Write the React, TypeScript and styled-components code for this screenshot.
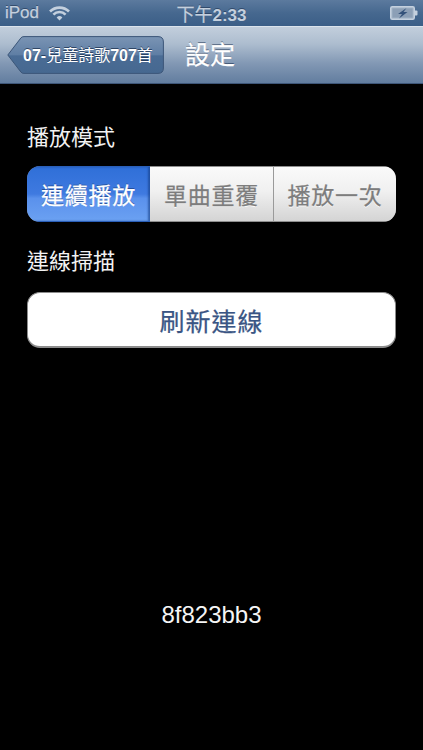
import React from "react";
import styled, { createGlobalStyle } from "styled-components";

const CJK = `"Liberation Sans", "Noto Sans CJK TC", sans-serif`;

const Global = createGlobalStyle`
  html, body { margin: 0; padding: 0; background: #000; }
  body { font-family: ${CJK}; }
`;

const Page = styled.div`
  width: 423px;
  height: 750px;
  background: #000;
  display: flex;
  flex-direction: column;
  overflow: hidden;
`;

const StatusBar = styled.div`
  height: 26px;
  box-sizing: border-box;
  padding: 0 5px 0 5px;
  display: grid;
  grid-template-columns: 1fr auto 1fr;
  align-items: center;
  background: linear-gradient(#5c7a9e 0%, #46688f 50%, #3b5e87 100%);
  color: #c4d0de;
  font-size: 17px;
  -webkit-text-stroke: 0.25px #c4d0de;
  text-shadow: 0 -1px 0 rgba(30, 50, 80, 0.6);
`;

const Carrier = styled.div`
  display: flex;
  align-items: center;
  gap: 10px;
`;

const Clock = styled.div`
  font-size: 18px;
`;

const ClockDigits = styled.b`
  font-size: 17px;
  font-weight: 700;
  -webkit-text-stroke: 0;
`;

const BatteryWrap = styled.div`
  display: flex;
  justify-content: flex-end;
`;

const NavBar = styled.div`
  height: 58px;
  box-sizing: border-box;
  padding: 9px 0 0 7px;
  display: flex;
  align-items: flex-start;
  gap: 21px;
  background: linear-gradient(#c2cedc 0%, #adbdcf 30%, #8298b4 65%, #627d9f 100%);
  border-top: 1px solid #dbe3ec;
  border-bottom: 1px solid #3e5678;
`;

const BackButton = styled.div`
  position: relative;
  width: 157px;
  height: 38px;
  box-sizing: border-box;
  display: flex;
  align-items: center;
  padding: 0 0 2px 16px;
  color: #fff;
  font-size: 16px;
  white-space: nowrap;
  text-shadow: 0 -1px 0 rgba(20, 40, 70, 0.7);
`;

const BackShape = styled.svg`
  position: absolute;
  left: 0;
  top: 0;
`;

const BackLabel = styled.span`
  position: relative;
`;

const Strong = styled.b`
  font-weight: 700;
`;

const Title = styled.div`
  margin-top: 4px;
  font-size: 25px;
  line-height: 30px;
  color: #fff;
  -webkit-text-stroke: 0.3px #fff;
  text-shadow: 0 -1px 0 rgba(40, 60, 90, 0.7);
`;

const Content = styled.div`
  flex: 1;
  display: flex;
  flex-direction: column;
  padding: 0 27px;
`;

const SectionLabel = styled.div<{ $top: number }>`
  margin-top: ${(p) => p.$top}px;
  height: 26px;
  line-height: 26px;
  font-size: 22px;
  color: #f2f2f2;
`;

const Segmented = styled.div`
  margin-top: 15px;
  width: 369px;
  height: 56px;
  display: grid;
  grid-template-columns: 123px 123px 123px;
  border-radius: 13px;
  overflow: hidden;
  box-shadow: inset 0 0 0 1px #888;
`;

const Segment = styled.div<{ $active?: boolean; $divider?: boolean }>`
  display: flex;
  align-items: center;
  justify-content: center;
  font-size: 23px;
  letter-spacing: 0.8px;
  box-sizing: border-box;
  border-left: ${(p) => (p.$divider ? "1px solid #9a9a9a" : "none")};
  color: ${(p) => (p.$active ? "#fff" : "#7d7d7d")};
  -webkit-text-stroke: 0.25px currentColor;
  background: ${(p) =>
    p.$active
      ? "linear-gradient(#2f6fd8 0%, #3f7ae0 50%, #5a91ec 58%, #6ba1f2 100%)"
      : "linear-gradient(#fafafa 0%, #f0f0f0 45%, #d4d4d4 100%)"};
  border-top: ${(p) => (p.$active ? "1px solid #2a5fb8" : "1px solid #8e8e8e")};
  border-bottom: ${(p) => (p.$active ? "1px solid #2a5fb8" : "1px solid #8e8e8e")};
  box-shadow: ${(p) =>
    p.$active ? "inset -2px 0 2px rgba(20,60,130,0.6)" : "none"};
  text-shadow: ${(p) =>
    p.$active ? "0 -1px 0 rgba(20,50,110,0.6)" : "0 1px 0 #fff"};
`;

const RefreshButton = styled.div`
  margin-top: 17px;
  width: 369px;
  height: 56px;
  box-sizing: border-box;
  display: flex;
  align-items: center;
  justify-content: center;
  background: #fff;
  border: 1px solid #8c8c8c;
  border-bottom: 2px solid #8c8c8c;
  border-radius: 13px;
  color: #3a5584;
  font-size: 25px;
  letter-spacing: 1px;
  -webkit-text-stroke: 0.25px currentColor;
`;

const Code = styled.div`
  margin-top: 254px;
  text-align: center;
  font-family: "Liberation Sans", sans-serif;
  font-size: 24px;
  line-height: 26px;
  color: #f5f5f5;
`;

const Wifi = () => (
  <svg width="21" height="15" viewBox="0 0 21 15">
    <path d="M1 5.5 A13.5 13.5 0 0 1 20 5.5" fill="none" stroke="#c4d0de" strokeWidth="2.6" />
    <path d="M4.4 8.6 A8.6 8.6 0 0 1 16.6 8.6" fill="none" stroke="#c4d0de" strokeWidth="2.6" />
    <path d="M7.6 11.4 A4.2 4.2 0 0 1 13.4 11.4 L10.5 14.4 Z" fill="#c4d0de" />
  </svg>
);

const Battery = () => (
  <svg width="28" height="14" viewBox="0 0 28 14">
    <rect x="0.75" y="0.75" width="23.5" height="12.5" rx="1.5" fill="#9fb0c4" stroke="#c4d0de" strokeWidth="1.5" />
    <rect x="2.5" y="2.5" width="20" height="9" fill="#8c9fb6" />
    <path d="M25 4.5 h1.5 a1 1 0 0 1 1 1 v3 a1 1 0 0 1 -1 1 h-1.5 Z" fill="#c4d0de" />
    <path d="M16.5 2 L8 8 L12 8 L9 12.5 L17.5 6 L13.5 6 Z" fill="#34527a" />
  </svg>
);

const BackPlate = () => (
  <BackShape width="157" height="38" viewBox="0 0 157 38">
    <defs>
      <linearGradient id="backFill" x1="0" y1="0" x2="0" y2="1">
        <stop offset="0" stopColor="#7a94b4" />
        <stop offset="0.5" stopColor="#5f7ea4" />
        <stop offset="0.52" stopColor="#4a6c95" />
        <stop offset="1" stopColor="#466890" />
      </linearGradient>
    </defs>
    <path
      d="M0.8 19 L14 1.8 Q15 0.6 17 0.6 L151 0.6 Q156.4 0.6 156.4 6 L156.4 32 Q156.4 37.4 151 37.4 L17 37.4 Q15 37.4 14 36.2 Z"
      fill="url(#backFill)"
      stroke="#3c5678"
      strokeWidth="1"
    />
  </BackShape>
);

export default function App() {
  return (
    <Page>
      <Global />
      <StatusBar>
        <Carrier>
          iPod
          <Wifi />
        </Carrier>
        <Clock>
          下午<ClockDigits>2:33</ClockDigits>
        </Clock>
        <BatteryWrap>
          <Battery />
        </BatteryWrap>
      </StatusBar>
      <NavBar>
        <BackButton>
          <BackPlate />
          <BackLabel>
            <Strong>07-</Strong>兒童詩歌<Strong>707</Strong>首
          </BackLabel>
        </BackButton>
        <Title>設定</Title>
      </NavBar>
      <Content>
        <SectionLabel $top={41}>播放模式</SectionLabel>
        <Segmented>
          <Segment $active>連續播放</Segment>
          <Segment>單曲重覆</Segment>
          <Segment $divider>播放一次</Segment>
        </Segmented>
        <SectionLabel $top={27}>連線掃描</SectionLabel>
        <RefreshButton>刷新連線</RefreshButton>
        <Code>8f823bb3</Code>
      </Content>
    </Page>
  );
}
